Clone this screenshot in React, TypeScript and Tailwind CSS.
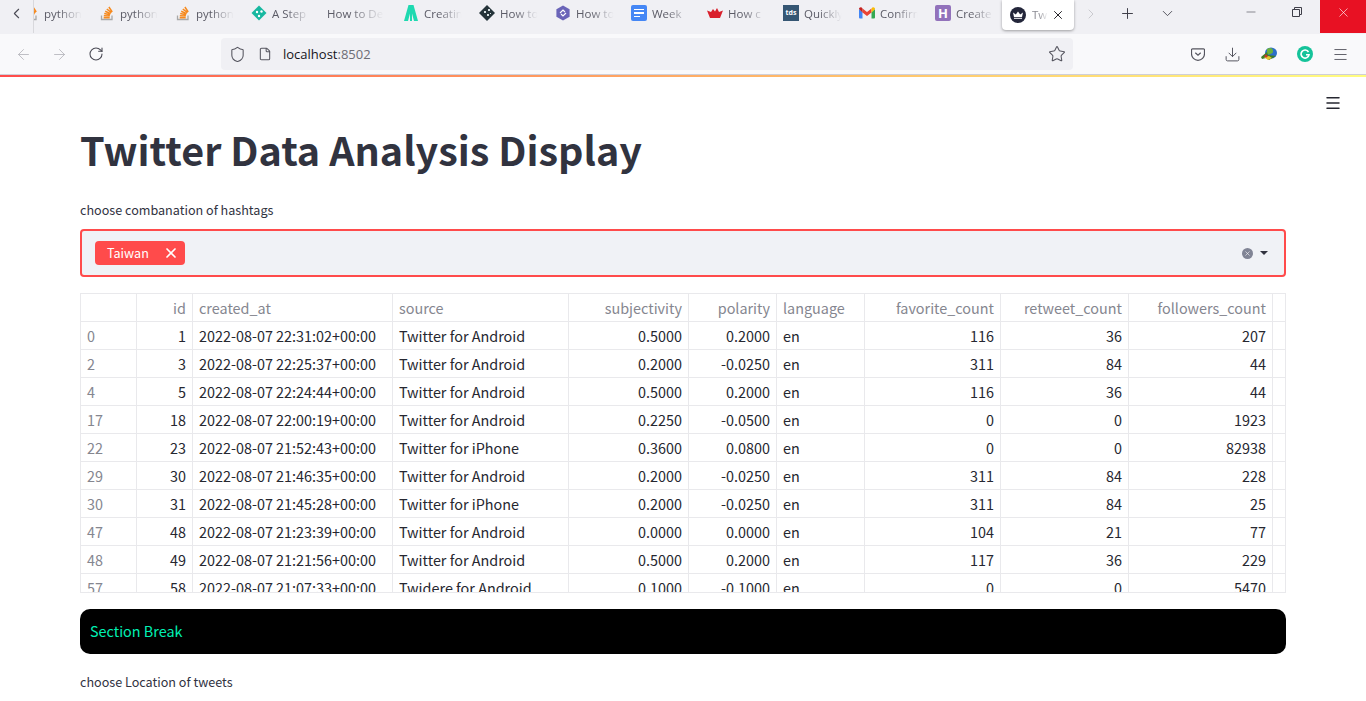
import { ArrowLeft, ArrowRight, ChevronDown, ChevronLeft, ChevronRight, Download, File, Menu, Minus, Plus, RotateCw, Shield, Star, X } from "lucide-react"
import type { ReactNode } from "react"

const source = "font-['Noto_Sans_CJK_SC','Noto_Sans',sans-serif]"

const StackIcon = () => (
  <svg width="16" height="16" viewBox="0 0 16 16" fill="none">
    <path d="M2.5 10.5v4h10.500v-4" stroke="#a8a8a8" strokeWidth="1.300" />
    <path d="M4.700 12.800h6M4.800 10.700l6 .4M5.200 8.500l5.900 1.300M6.200 6.300l5.400 2.500M7.800 4l4.700 3.700M9.900 2l3.300 5" stroke="#f68a1f" strokeWidth="1.500" />
  </svg>
)

const Diamond = () => (
  <svg width="16" height="16" viewBox="0 0 16 16">
    <path d="M8 0.500 15.500 8 8 15.500 0.500 8Z" fill="#17b8a0" />
    <circle cx="6" cy="7" r="1.200" fill="#fff" />
    <circle cx="10.500" cy="6.500" r="1.200" fill="#fff" />
    <circle cx="8" cy="11" r="1.200" fill="#fff" />
  </svg>
)

const Creative = () => (
  <svg width="16" height="18" viewBox="0 0 16 18">
    <path d="M5.500 1h5l4.500 16h-4L9 9.500V17H7V9.500L5 17H1Z" fill="#1ed9b0" />
  </svg>
)

const DarkDiamond = () => (
  <svg width="16" height="16" viewBox="0 0 16 16">
    <path d="M8 0 16 8 8 16 0 8Z" fill="#25343a" />
    <path d="M5 6h2v2H5zM9 4h2v2H9zM8 9h2v2H8zM11 8h1v1h-1z" fill="#d5dfe0" />
  </svg>
)

const HexIcon = () => (
  <svg width="16" height="16" viewBox="0 0 16 16">
    <path d="M8 0.500 14.600 4.200v7.600L8 15.500 1.400 11.800V4.200Z" fill="#6a64b8" />
    <path d="M5 8l3-3 2 2M11 8l-3 3-2-2" stroke="#fff" strokeWidth="1.100" fill="none" />
  </svg>
)

const DocsIcon = () => (
  <div className="flex h-4 w-4 flex-col justify-center gap-[2px] rounded-[2px] bg-[#4587f5] pl-[3px]">
    <div className="h-[1.5px] w-[10px] bg-white" />
    <div className="h-[1.5px] w-[10px] bg-white" />
    <div className="h-[1.5px] w-[6px] bg-white" />
  </div>
)

const ShipIcon = () => (
  <svg width="16" height="12" viewBox="0 0 16 12">
    <path d="M0 3.500 4 5l2-3 2 2.500L10 1l2 4 4-1.500L13 11H3Z" fill="#d9202c" />
  </svg>
)

const TdsIcon = () => (
  <div className="flex h-4 w-4 items-center justify-center bg-[#355673] text-[7px] font-bold text-white">tds</div>
)

const GmailIcon = () => (
  <svg width="16" height="12" viewBox="0 0 16 12" fill="none">
    <path d="M0 2v8.500A1 1 0 0 0 1 11.500h2.500V5Z" fill="#4285f4" />
    <path d="M16 2v8.500a1 1 0 0 1-1 1h-2.500V5Z" fill="#34a853" />
    <path d="M3.500 5.500V1.600L8 5l4.500-3.400v3.900L8 9Z" fill="#ea4335" />
    <path d="M0 2c0-1.400 1.600-2.200 2.600-1.400l.9.9v4Z" fill="#c5221f" />
    <path d="M16 2c0-1.400-1.600-2.200-2.600-1.400l-.9.9v4Z" fill="#fbbc04" />
  </svg>
)

const HerokuIcon = () => (
  <div className="flex h-4 w-4 items-center justify-center rounded-[2px] bg-[#9272bb] text-[13px] font-bold leading-none text-white">H</div>
)

const Crown = () => (
  <div className="flex h-4 w-4 items-center justify-center rounded-full bg-[#23263a]">
    <svg width="10" height="8" viewBox="0 0 10 8">
      <path d="M0 1.500 2.800 3.600 5 .5l2.200 3.100L10 1.500 9 6H1Z" fill="#fff" />
      <path d="M1 6.800h8v1H1z" fill="#fff" />
    </svg>
  </div>
)

const tabs: { icon: ReactNode; title: string }[] = [
  { icon: <StackIcon />, title: "python" },
  { icon: <StackIcon />, title: "python" },
  { icon: <StackIcon />, title: "python" },
  { icon: <Diamond />, title: "A Step" },
  { icon: null, title: "How to Deploy" },
  { icon: <Creative />, title: "Creating" },
  { icon: <DarkDiamond />, title: "How to" },
  { icon: <HexIcon />, title: "How to" },
  { icon: <DocsIcon />, title: "Week" },
  { icon: <ShipIcon />, title: "How c" },
  { icon: <TdsIcon />, title: "Quickly" },
  { icon: <GmailIcon />, title: "Confirm" },
  { icon: <HerokuIcon />, title: "Create" },
]

const rows = [
  ["0", "1", "2022-08-07 22:31:02+00:00", "Twitter for Android", "0.5000", "0.2000", "en", "116", "36", "207"],
  ["2", "3", "2022-08-07 22:25:37+00:00", "Twitter for Android", "0.2000", "-0.0250", "en", "311", "84", "44"],
  ["4", "5", "2022-08-07 22:24:44+00:00", "Twitter for Android", "0.5000", "0.2000", "en", "116", "36", "44"],
  ["17", "18", "2022-08-07 22:00:19+00:00", "Twitter for Android", "0.2250", "-0.0500", "en", "0", "0", "1923"],
  ["22", "23", "2022-08-07 21:52:43+00:00", "Twitter for iPhone", "0.3600", "0.0800", "en", "0", "0", "82938"],
  ["29", "30", "2022-08-07 21:46:35+00:00", "Twitter for Android", "0.2000", "-0.0250", "en", "311", "84", "228"],
  ["30", "31", "2022-08-07 21:45:28+00:00", "Twitter for iPhone", "0.2000", "-0.0250", "en", "311", "84", "25"],
  ["47", "48", "2022-08-07 21:23:39+00:00", "Twitter for Android", "0.0000", "0.0000", "en", "104", "21", "77"],
  ["48", "49", "2022-08-07 21:21:56+00:00", "Twitter for Android", "0.5000", "0.2000", "en", "117", "36", "229"],
  ["57", "58", "2022-08-07 21:07:33+00:00", "Twidere for Android", "0.1000", "-0.1000", "en", "0", "0", "5470"],
]

const headers = ["", "id", "created_at", "source", "subjectivity", "polarity", "language", "favorite_count", "retweet_count", "followers_count"]

// left aligned columns: index, created_at, source, language
const leftCols = [0, 2, 3, 6]

function Row({ cells, head }: { cells: string[]; head?: boolean }) {
  return (
    <div className="grid h-7 grid-cols-[56px_56px_200px_176px_120px_88px_88px_136px_128px_144px_1fr] border-b border-[#e9e9ec]">
      {cells.map((c, i) => (
        <div
          key={i}
          className={`h-7 overflow-hidden whitespace-nowrap border-r border-[#e9e9ec] px-[6px] text-[14.4px] leading-[28px] ${
            leftCols.includes(i) ? "text-left" : "text-right"
          } ${head || i === 0 ? "text-[#85868f]" : "text-[#262730]"}`}
        >
          {c}
        </div>
      ))}
      <div />
    </div>
  )
}

export default function App() {
  return (
    <div className="h-[701px] w-[1366px] overflow-hidden bg-white">
      {/* browser tabs */}
      <div className="flex h-[34px] items-stretch bg-[#f0f0f4] font-['Open_Sans',sans-serif] text-[11.5px] text-[#5b5b66]">
        <div className="relative z-10 mb-[1px] flex w-[34px] items-center border-r border-[#d8d8dc] bg-[#f0f0f4] pb-[7px] pl-[8px]">
          <ChevronLeft size={17} strokeWidth={1.5} className="text-[#4a4a54]" />
        </div>
        <div className="-ml-[18px] flex">
          {tabs.map((t, i) => (
            <div key={i} className="flex w-[76px] items-center gap-[5px] overflow-hidden pb-[8px] pl-[7px] pr-[7px]">
              {t.icon && <div className="flex w-4 shrink-0 justify-center">{t.icon}</div>}
              <span className="mt-[1px] min-w-0 flex-1 overflow-hidden whitespace-nowrap [mask-image:linear-gradient(to_right,black_35%,transparent_92%)]">{t.title}</span>
            </div>
          ))}
        </div>
        <div className="-ml-[2px] mb-[4px] flex h-[30px] w-[72px] items-center rounded-b-[4px] bg-white pl-[8px] shadow-[0_1px_3px_rgba(0,0,0,0.35)]">
          <Crown />
          <span className="ml-[6px] w-[16px] overflow-hidden whitespace-nowrap text-[#8a8a92] [mask-image:linear-gradient(to_right,black_40%,transparent)]">Twitter</span>
          <X size={14} strokeWidth={1.6} className="ml-[3px] text-[#15141a]" />
        </div>
        <div className="ml-[9px] flex items-center pb-[7px]">
          <ChevronRight size={16} strokeWidth={1.3} className="text-[#c4c4c8]" />
          <Plus size={17} strokeWidth={1.4} className="ml-[20px] text-[#3e3e48]" />
          <ChevronDown size={17} strokeWidth={1.2} className="ml-[23px] text-[#3e3e48]" />
        </div>
        <div className="mb-[1px] ml-auto flex">
          <div className="flex w-[46px] items-center justify-center pb-[9px]">
            <Minus size={14} strokeWidth={1} className="text-[#3e3e48]" />
          </div>
          <div className="flex w-[46px] items-center justify-center pb-[9px]">
            <svg width="10" height="10" viewBox="0 0 10 10" fill="none" stroke="#3e3e48" strokeWidth="1">
              <path d="M.5 2.500h7v7h-7zM2.500 2.500v-2h7v7h-2" />
            </svg>
          </div>
          <div className="flex w-[46px] items-center justify-center bg-[#e81123] pb-[9px]">
            <X size={15} strokeWidth={1} className="text-white" />
          </div>
        </div>
      </div>

      {/* nav bar */}
      <div className="flex h-[40px] items-center bg-[#f9f9fb] text-[#55555f]">
        <ArrowLeft size={17} strokeWidth={1.2} className="ml-[15px] text-[#b5b5bb]" />
        <ArrowRight size={17} strokeWidth={1.2} className="ml-[19px] text-[#b5b5bb]" />
        <RotateCw size={16} strokeWidth={1.6} className="ml-[20px] text-[#4a4a54]" />
        <div className="ml-[117px] flex h-8 w-[852px] items-center rounded-[4px] bg-[#f0f0f4] pl-[8px] pr-[7px]">
          <Shield size={17} strokeWidth={1.5} />
          <File size={14} strokeWidth={1.8} className="ml-[12px]" />
          <span className="ml-[11px] mt-[2px] font-['Open_Sans',sans-serif] text-[13px] text-[#15141a]">
            localhost<span className="text-[#6d6d75]">:8502</span>
          </span>
          <Star size={18} strokeWidth={1.4} className="ml-auto" />
        </div>
        <div className="ml-[118px] flex items-center">
          <svg width="14" height="13" viewBox="0 0 14 13" fill="none" stroke="#55555f" strokeWidth="1.2">
            <path d="M1.500.8h11a1 1 0 0 1 1 1v4a6.500 6.500 0 0 1-13 0v-4a1 1 0 0 1 1-1Z" />
            <path d="M4.300 4.800 7 7.300l2.700-2.500" />
          </svg>
          <Download size={17} strokeWidth={1.4} className="ml-[19px]" />
          <svg width="17" height="15" viewBox="0 0 17 15" className="ml-[20px]">
            <ellipse cx="10" cy="6" rx="6" ry="5.500" fill="#2c6fc9" />
            <path d="M6 2c3-2 6-1 6 2s-4 4-6 3Z" fill="#6bb13c" />
            <path d="M0 10 6 5l1 3 8 1-7 4-3-2-4 1Z" fill="#3f7d26" />
            <path d="M3 10l5-1 3 2-4 2Z" fill="#e9c42c" />
            <circle cx="5" cy="9" r="1.500" fill="#c9342b" />
          </svg>
          <div className="ml-[19px] flex h-4 w-4 items-center justify-center rounded-full bg-[#15c39a]">
            <svg width="10" height="10" viewBox="0 0 10 10" fill="none" stroke="#fff" strokeWidth="1.600">
              <path d="M8.500 3A4 4 0 1 0 9 5.800H6" />
            </svg>
          </div>
          <Menu size={17} strokeWidth={1.3} className="ml-[19px]" />
        </div>
      </div>

      <div className="h-[1px] bg-[#cfcfd8]" />
      <div className="h-[2px] bg-gradient-to-r from-[#ff4b4b] to-[#fffd80]" />

      {/* streamlit page */}
      <div className={`relative px-[80px] pt-[46px] ${source} text-[#262730]`}>
        <Menu size={18} strokeWidth={2} className="absolute right-[24px] top-[17px] text-[#262730]" />
        <h1 className="h-[53px] text-[39.5px] font-bold leading-[52px] text-[#31333f]">Twitter Data Analysis Display</h1>
        <div className="mt-[24px] text-[12.6px] leading-[20px] text-[#31333f]">choose combanation of hashtags</div>
        <div className="mt-[9px] flex h-[48px] items-center rounded-[4px] border-2 border-[#ff4b4b] bg-[#f0f2f6] pl-[13px] pr-[16px]">
          <div className="flex h-6 w-[90px] items-center rounded-[4px] bg-[#ff4b4b] pl-3 text-[12.6px] text-white">
            Taiwan
            <X size={16} strokeWidth={2.5} className="ml-[14px]" />
          </div>
          <div className="ml-auto flex h-[11px] w-[11px] items-center justify-center rounded-full bg-[#808495]">
            <X size={7} strokeWidth={2} className="text-white" />
          </div>
          <div className="ml-[7px] h-0 w-0 border-x-[4px] border-t-[4px] border-x-transparent border-t-[#31333f]" />
        </div>

        <div className="mt-[16px] h-[300px] overflow-hidden border border-[#e9e9ec]">
          <Row cells={headers} head />
          {rows.map((r) => (
            <Row key={r[0]} cells={r} />
          ))}
        </div>

        <div className="mt-[16px] flex h-[45px] items-center rounded-[10px] bg-black pb-[1px] pl-[10px] text-[14.4px] text-[#00f0b4]">Section Break</div>
        <div className="mt-[18px] text-[12.6px] leading-[20px] text-[#31333f]">choose Location of tweets</div>
      </div>
    </div>
  )
}
